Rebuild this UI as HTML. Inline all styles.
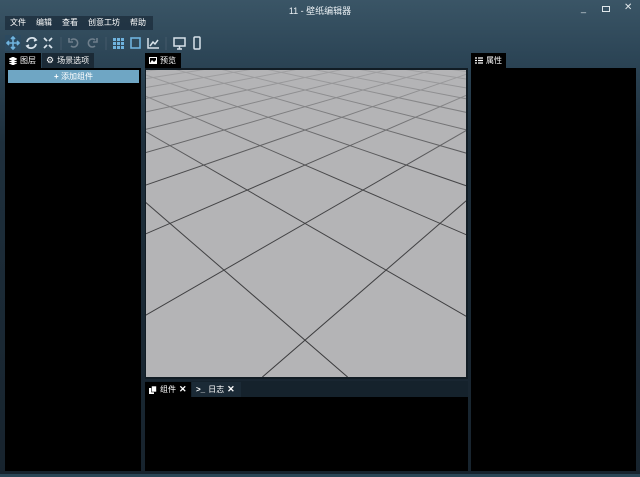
<!DOCTYPE html>
<html><head><meta charset="utf-8"><style>
*{margin:0;padding:0;box-sizing:border-box}
body{width:640px;height:477px;overflow:hidden;position:relative;font-family:"Liberation Sans","Noto Sans CJK SC",sans-serif;font-size:9px;color:#fff;
background:linear-gradient(180deg,#3a5566 0%,#2c4556 12%,#1e2f3c 30%,#17232d 100%);}
.abs{position:absolute}
.title{left:0;width:640px;top:4px;text-align:center;font-size:9px;color:#e8eef2}
.menu{left:5px;top:16px;width:148px;height:14px;background:rgba(30,48,64,.85);display:flex;gap:0}
.menu span{padding:0 5px;line-height:14px;font-size:8px}
.tb{top:35px;height:16px}
.panel{background:#000}
.tab{height:15px;background:#000;font-size:8px;line-height:15px;padding:0 4px;display:flex;align-items:center;gap:3px}
.tab.off{background:#1b2a36}
.ic{display:inline-block;width:7px;height:7px;background:#fff}
.wc{color:#dfe6ea;font-size:10px}
</style></head><body>
<div class="abs title">11 - 壁纸编辑器</div>
<div class="abs wc" style="left:262px;top:4px;font-size:0"></div>
<div class="abs wc" style="left:581px;top:3px;font-size:9px">_</div>
<div class="abs" style="left:602px;top:6px;width:8px;height:6px;border:1.5px solid #dfe6ea"></div>
<div class="abs wc" style="left:624px;top:2px;font-size:10px">✕</div>
<div class="abs menu"><span>文件</span><span>编辑</span><span>查看</span><span>创意工坊</span><span>帮助</span></div>
<!-- toolbar -->
<svg class="abs" style="left:0;top:33px" width="210" height="20" viewBox="0 0 210 20">
<rect x="5" y="2" width="16" height="16" fill="#2c4a60"/>
<g stroke="#6fb3de" stroke-width="1.6" fill="none">
<path d="M13 4v12M7 10h12M11 6l2-2 2 2M11 14l2 2 2-2M9 8l-2 2 2 2M17 8l2 2-2 2"/>
</g>
<g stroke="#d8e2ea" stroke-width="1.8" fill="none">
<path d="M27 9a5 5 0 0 1 9-2M36 11a5 5 0 0 1-9 2"/><path d="M34 5l2 2-2 1M29 15l-2-2 2-1"/>
<path d="M44 5l3 3M52 5l-3 3M44 15l3-3M52 15l-3-3"/>
</g>
<line x1="61" y1="4" x2="61" y2="17" stroke="#44596a"/>
<g stroke="#6f7f8c" stroke-width="1.6" fill="none"><path d="M71 7a4 4 0 1 1 0 6M69 5v4h4"/><path d="M95 7a4 4 0 1 0 0 6M97 5v4h-4"/></g>
<line x1="106" y1="4" x2="106" y2="17" stroke="#44596a"/>
<g fill="#6fb3de"><rect x="113" y="5" width="3" height="3"/><rect x="117" y="5" width="3" height="3"/><rect x="121" y="5" width="3" height="3"/><rect x="113" y="9" width="3" height="3"/><rect x="117" y="9" width="3" height="3"/><rect x="121" y="9" width="3" height="3"/><rect x="113" y="13" width="3" height="3"/><rect x="117" y="13" width="3" height="3"/><rect x="121" y="13" width="3" height="3"/></g>
<rect x="131" y="5" width="9" height="10" stroke="#6fb3de" stroke-width="1.6" fill="none"/>
<path d="M148 5v10h11M150 13l3-4 2 2 3-4" stroke="#d8e2ea" stroke-width="1.5" fill="none"/>
<line x1="166" y1="4" x2="166" y2="17" stroke="#44596a"/>
<g stroke="#d8e2ea" stroke-width="1.5" fill="none"><rect x="174" y="5" width="11" height="8"/><path d="M177 16h5M179.5 13v3"/><rect x="194" y="4" width="6" height="12" rx="1"/></g>
</svg>
<!-- left panel -->
<div class="abs tab" style="left:5px;top:53px;width:36px">
<svg width="8" height="8"><path d="M4 0L8 2L4 4L0 2Z M0 4L4 6L8 4 M0 6L4 8L8 6" fill="#fff" stroke="#fff" stroke-width=".6"/></svg>图层</div>
<div class="abs tab off" style="left:42px;top:53px;width:52px"><span style="font-size:9px">⚙</span>场景选项</div>
<div class="abs panel" style="left:5px;top:68px;width:136px;height:403px"></div>
<div class="abs" style="left:8px;top:70px;width:131px;height:13px;background:#6fa6c4;text-align:center;font-size:8px;line-height:13px;color:#fff"><b>+</b> 添加组件</div>
<!-- preview -->
<div class="abs tab" style="left:145px;top:53px;width:36px"><svg width="8" height="7"><rect x=".5" y=".5" width="7" height="6" fill="none" stroke="#fff"/><path d="M1 6l2-3 2 2 2-2v3z" fill="#fff"/></svg>预览</div>
<div class="abs" style="left:145px;top:68px;width:323px;height:311px;background:#111c24"></div>
<svg class="abs" style="left:146px;top:70px;background:#b4b4b6" width="320" height="307" viewBox="0 0 320 307">
<defs><linearGradient id="f" x1="0" y1="0" x2="0" y2="1"><stop offset="0" stop-color="#b4b4b6" stop-opacity=".85"/><stop offset=".35" stop-color="#b4b4b6" stop-opacity=".1"/><stop offset="1" stop-color="#b4b4b6" stop-opacity="0"/></linearGradient></defs>
<g stroke="#3a3a3c" stroke-width="1" fill="none">
<path d="M564 -80L340.3 307M564 -80L116.4 307M564 -80L-107.5 307M564 -80L-331.4 307M564 -80L-555.3 307M564 -80L-779.2 307M564 -80L-1003.1 307M564 -80L-1227 307M564 -80L-1450.9 307M564 -80L-1674.8 307M564 -80L-1898.7 307M564 -80L-2122.6 307M564 -80L-2346.5 307M564 -80L-2570.4 307M564 -80L-2794.3 307"/>
<path d="M-246 -80L-22.3 307M-246 -80L201.6 307M-246 -80L425.5 307M-246 -80L649.4 307M-246 -80L873.3 307M-246 -80L1097.2 307M-246 -80L1321.1 307M-246 -80L1545 307M-246 -80L1768.9 307M-246 -80L1992.8 307M-246 -80L2216.7 307M-246 -80L2440.6 307M-246 -80L2664.5 307M-246 -80L2888.4 307M-246 -80L3112.3 307"/>
</g>
<rect width="320" height="307" fill="url(#f)"/>
</svg>
<!-- bottom -->
<div class="abs" style="left:145px;top:381px;width:323px;height:16px;background:#15222c"></div>
<div class="abs tab" style="left:145px;top:382px;width:46px;height:15px"><svg width="8" height="8"><rect x="0" y="2" width="5" height="6" fill="#fff"/><rect x="2.5" y="0" width="5" height="6" fill="#fff" stroke="#000" stroke-width=".6"/></svg>组件 <b style="font-size:9px">✕</b></div>
<div class="abs tab off" style="left:192px;top:382px;width:49px;height:15px"><b>&gt;_</b> 日志 <b style="font-size:9px">✕</b></div>
<div class="abs panel" style="left:145px;top:397px;width:323px;height:74px"></div>
<!-- right -->
<div class="abs tab" style="left:471px;top:53px;width:35px"><svg width="8" height="7"><path d="M0 1h2M3 1h5M0 3.5h2M3 3.5h5M0 6h2M3 6h5" stroke="#fff" stroke-width="1.2"/></svg>属性</div>
<div class="abs panel" style="left:471px;top:68px;width:165px;height:403px"></div>
<div class="abs" style="left:0;top:474px;width:640px;height:3px;background:#2a4656"></div>
</body></html>
